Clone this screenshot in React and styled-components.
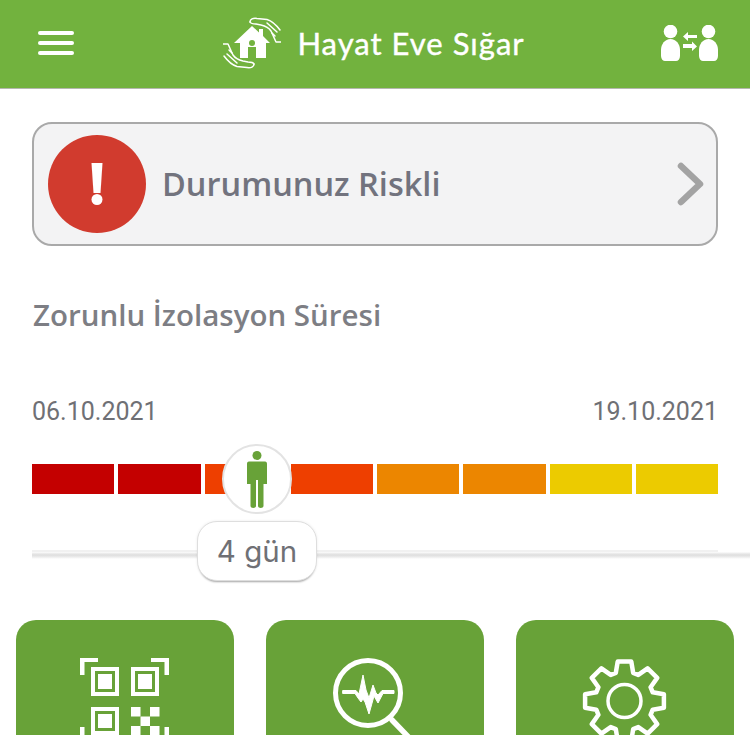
import styled, { createGlobalStyle } from "styled-components";

const GlobalStyle = createGlobalStyle`
  html, body {
    margin: 0;
    padding: 0;
    background: #fff;
    overflow: hidden;
  }
  * {
    box-sizing: border-box;
  }
`;

const Page = styled.div`
  width: 750px;
  height: 735px;
  overflow: hidden;
  font-family: "Open Sans", sans-serif;
`;

const Header = styled.header`
  height: 89px;
  background: #72b23e;
  border-bottom: 1px solid #b4b8ae;
  display: flex;
  align-items: center;
  justify-content: space-between;
  padding: 0 32px 2px 38px;
`;

const Burger = styled.button`
  width: 36px;
  height: 24px;
  padding: 0;
  border: none;
  background: transparent;
  display: flex;
  flex-direction: column;
  justify-content: space-between;

  span {
    display: block;
    height: 4px;
    border-radius: 2px;
    background: #fff;
  }
`;

const Brand = styled.div`
  display: flex;
  align-items: center;
  gap: 16px;
  margin-left: 13px;
`;

const BrandName = styled.span`
  font-family: "Lato", sans-serif;
  font-size: 31px;
  letter-spacing: 1px;
  color: #fff;
  -webkit-text-stroke: 0.4px #fff;
`;

const Content = styled.main`
  padding: 33px 32px 0;
`;

const StatusCard = styled.div`
  height: 124px;
  border: 2px solid #a9a9a9;
  border-radius: 20px;
  background: #f3f3f4;
  display: flex;
  align-items: center;
  padding: 0 12px 0 14px;
`;

const AlertCircle = styled.div`
  width: 98px;
  height: 98px;
  flex: none;
  border-radius: 50%;
  background: #d13b2e;
  display: flex;
  align-items: center;
  justify-content: center;
`;

const StatusText = styled.span`
  flex: 1;
  margin: -2px 0 0 16px;
  font-size: 32.5px;
  font-weight: 600;
  color: #72737e;
`;

const SectionTitle = styled.h2`
  margin: 51px 0 0 1px;
  font-size: 29.5px;
  line-height: 36px;
  font-weight: 600;
  color: #7d7e84;
`;

const DateRow = styled.div`
  display: flex;
  justify-content: space-between;
  margin-top: 64px;
  font-family: "Roboto", sans-serif;
  font-size: 25px;
  line-height: 30px;
  color: #6f7075;
`;

const Track = styled.div`
  position: relative;
  margin-top: 37px;
  height: 125px;
`;

const Segments = styled.div`
  display: grid;
  grid-template-columns: repeat(8, 1fr);
  column-gap: 4px;
`;

const Segment = styled.div`
  height: 30px;
  background: ${(props) => props.color};
`;

const Rail = styled.div`
  height: 10px;
  margin: 56px -32px 0 0;
  background:
    linear-gradient(#f1f1f1, #f1f1f1) left top / 686px 2px no-repeat,
    linear-gradient(to bottom, #fff 2px, #f0f0f0 3px, #dedede 5px, #ececec 7px, #fff 9px);
`;

const Knob = styled.div`
  position: absolute;
  left: 190px;
  top: -20px;
  width: 70px;
  height: 70px;
  border-radius: 50%;
  border: 2px solid #e3e3e3;
  background: #fff;
  display: flex;
  align-items: center;
  justify-content: center;
`;

const DayBubble = styled.div`
  position: absolute;
  left: 165px;
  top: 57px;
  width: 120px;
  height: 60px;
  border: 1px solid #dedede;
  border-radius: 20px;
  background: #fff;
  display: flex;
  align-items: center;
  justify-content: center;
  font-family: "Inter", sans-serif;
  font-size: 29.5px;
  color: #6f7075;
  box-shadow: 0 3px 2px -2px #a8a8a8, 0 0 3px rgba(0, 0, 0, 0.08);
`;

const ActionRow = styled.div`
  display: grid;
  grid-template-columns: repeat(3, 218px);
  justify-content: space-between;
  padding: 0 16px;
  margin-top: 31px;
`;

const ActionCard = styled.div`
  height: 200px;
  border-radius: 20px;
  background: #68a238;
  display: flex;
  justify-content: center;
  padding-top: 38px;
`;

const HAND_STROKES = [
  "M27 5C27 2 30 1 34 1.500L44 2.500C49 4 54 9 57 13",
  "M27 5C28 7 30 7 33 7L38 8C42 9 46 11 48 14C50 18 52 23 53 25H58",
  "M44 6L54 15",
  "M49 16L52 19",
];

function Logo() {
  return (
    <svg width="58" height="52" viewBox="0 0 58 52" fill="none">
      <g stroke="#fff" strokeWidth="1.5" strokeLinecap="round" strokeLinejoin="round">
        {HAND_STROKES.map((d) => (
          <path key={d} d={d} />
        ))}
        {HAND_STROKES.map((d) => (
          <path key={d} d={d} transform="rotate(180 29 26)" />
        ))}
      </g>
      <path d="M11 26L29 9L36 15.500V12H40V19L47 26H43V41H33V30H25V41H17V26Z" fill="#fff" />
      <circle cx="29" cy="26" r="3" fill="#72b23e" />
      <path d="M26 30H32V33H26Z" fill="#72b23e" />
    </svg>
  );
}

function TransferIcon() {
  return (
    <svg width="57" height="36" viewBox="0 0 57 36" fill="#fff">
      <circle cx="9.500" cy="6.500" r="6.800" />
      <path d="M9.500 14C15 14 19 19 19 25V31C19 34 17 36 15 36H4C2 36 0 34 0 31V25C0 19 4 14 9.500 14Z" />
      <circle cx="47.500" cy="6.500" r="6.800" />
      <path d="M47.500 14C53 14 57 19 57 25V31C57 34 55 36 53 36H42C40 36 38 34 38 31V25C38 19 42 14 47.500 14Z" />
      <path d="M36 10H27V7L22 11.500L27 16V13H36Z" />
      <path d="M22 19H31V16.500L36 21.500L31 26V23H22Z" />
    </svg>
  );
}

function Exclamation() {
  return (
    <svg width="16" height="42" viewBox="0 0 16 42" fill="#fff">
      <path d="M2.500 0H13.500L11.500 30H4.500Z" />
      <circle cx="8" cy="36.500" r="5.500" />
    </svg>
  );
}

function Chevron() {
  return (
    <svg width="27" height="44" viewBox="0 0 27 44" fill="none" stroke="#a3a3a3" strokeWidth="6.500" strokeLinecap="round" strokeLinejoin="round">
      <path d="M4 4L23 22L4 40" />
    </svg>
  );
}

function Person() {
  return (
    <svg width="20" height="57" viewBox="0 0 20 57" fill="#68a238">
      <circle cx="10" cy="4.500" r="4.500" />
      <path d="M2 10.500H18C19.500 10.500 20 11.500 20 13V33H16.500V55C16.500 57.500 11 57.500 11 55V29H9V55C9 57.500 3.500 57.500 3.500 55V33H0V13C0 11.500 .5 10.500 2 10.500Z" />
    </svg>
  );
}

function QrIcon() {
  return (
    <svg width="90" height="90" viewBox="0 0 90 90" fill="#fff">
      <path d="M0 17V0H18V4H4.500V17Z" />
      <path d="M89 17V0H71V4H84.500V17Z" />
      <path d="M0 69V87H18V83H4.500V69Z" />
      <path d="M89 69V87H71V83H84.500V69Z" />
      <path fillRule="evenodd" d="M11 9H39V38H11ZM15 13V34H35V13Z" />
      <rect x="18" y="16" width="14" height="15" />
      <path fillRule="evenodd" d="M51 9H79V38H51ZM55 13V34H75V13Z" />
      <rect x="58" y="16" width="14" height="15" />
      <path fillRule="evenodd" d="M11 49H39V77H11ZM15 53V73H35V53Z" />
      <rect x="18" y="56" width="14" height="14" />
      <rect x="51" y="49" width="9.500" height="9.500" />
      <rect x="70" y="49" width="9.500" height="9.500" />
      <rect x="60.500" y="58.500" width="9.500" height="9.500" />
      <rect x="51" y="68" width="9.500" height="9.500" />
      <rect x="70" y="68" width="9.500" height="9.500" />
    </svg>
  );
}

function PulseSearchIcon() {
  return (
    <svg width="84" height="90" viewBox="0 0 84 90" overflow="visible" fill="none" stroke="#fff" strokeLinecap="round" strokeLinejoin="round">
      <circle cx="35" cy="35" r="32.500" strokeWidth="5" />
      <path d="M59 62L88 92" strokeWidth="5.500" />
      <path
        d="M10 32.500H23L26 36L30 17L33 32L36 40L40 27L43 35L45 37L49 32.500H61V35.500H50L45 45L41 38L36 56L32 44L30 41L28 44L25 40L22 35.500H10Z"
        fill="#fff"
        strokeWidth="1"
      />
    </svg>
  );
}

// Rueda dentada de 8 dientes, los puntos se calculan para no escribirlos a mano
function gearPath(cx, cy, outer, root) {
  const points = [];
  for (let i = 0; i < 8; i++) {
    const mid = (i * Math.PI) / 4 - Math.PI / 2;
    const angles = [[-0.30, root], [-0.17, outer], [0.17, outer], [0.30, root]];
    angles.forEach(([offset, r]) => {
      points.push(`${(cx + r * Math.cos(mid + offset)).toFixed(1)} ${(cy + r * Math.sin(mid + offset)).toFixed(1)}`);
    });
  }
  return `M${points.join("L")}Z`;
}

function GearIcon() {
  return (
    <svg width="86" height="90" viewBox="0 0 86 90" fill="none" stroke="#fff" strokeLinejoin="round">
      <circle cx="42.500" cy="43" r="16.500" strokeWidth="3.500" />
      <path d={gearPath(42.5, 43, 40, 29.5)} strokeWidth="4.500" />
    </svg>
  );
}

const SEGMENT_COLORS = [
  "#c40000",
  "#c40000",
  "#ee3f00",
  "#ee3f00",
  "#ec8600",
  "#ec8600",
  "#eccb00",
  "#eccb00",
];

export default function App() {
  return (
    <Page>
      <GlobalStyle />
      <Header>
        <Burger>
          <span />
          <span />
          <span />
        </Burger>
        <Brand>
          <Logo />
          <BrandName>Hayat Eve Sığar</BrandName>
        </Brand>
        <TransferIcon />
      </Header>
      <Content>
        <StatusCard>
          <AlertCircle>
            <Exclamation />
          </AlertCircle>
          <StatusText>Durumunuz Riskli</StatusText>
          <Chevron />
        </StatusCard>
        <SectionTitle>Zorunlu İzolasyon Süresi</SectionTitle>
        <DateRow>
          <span>06.10.2021</span>
          <span>19.10.2021</span>
        </DateRow>
        <Track>
          <Segments>
            {SEGMENT_COLORS.map((color, i) => (
              <Segment key={i} color={color} />
            ))}
          </Segments>
          <Rail />
          <Knob>
            <Person />
          </Knob>
          <DayBubble>4 gün</DayBubble>
        </Track>
      </Content>
      <ActionRow>
        <ActionCard>
          <QrIcon />
        </ActionCard>
        <ActionCard>
          <PulseSearchIcon />
        </ActionCard>
        <ActionCard>
          <GearIcon />
        </ActionCard>
      </ActionRow>
    </Page>
  );
}
